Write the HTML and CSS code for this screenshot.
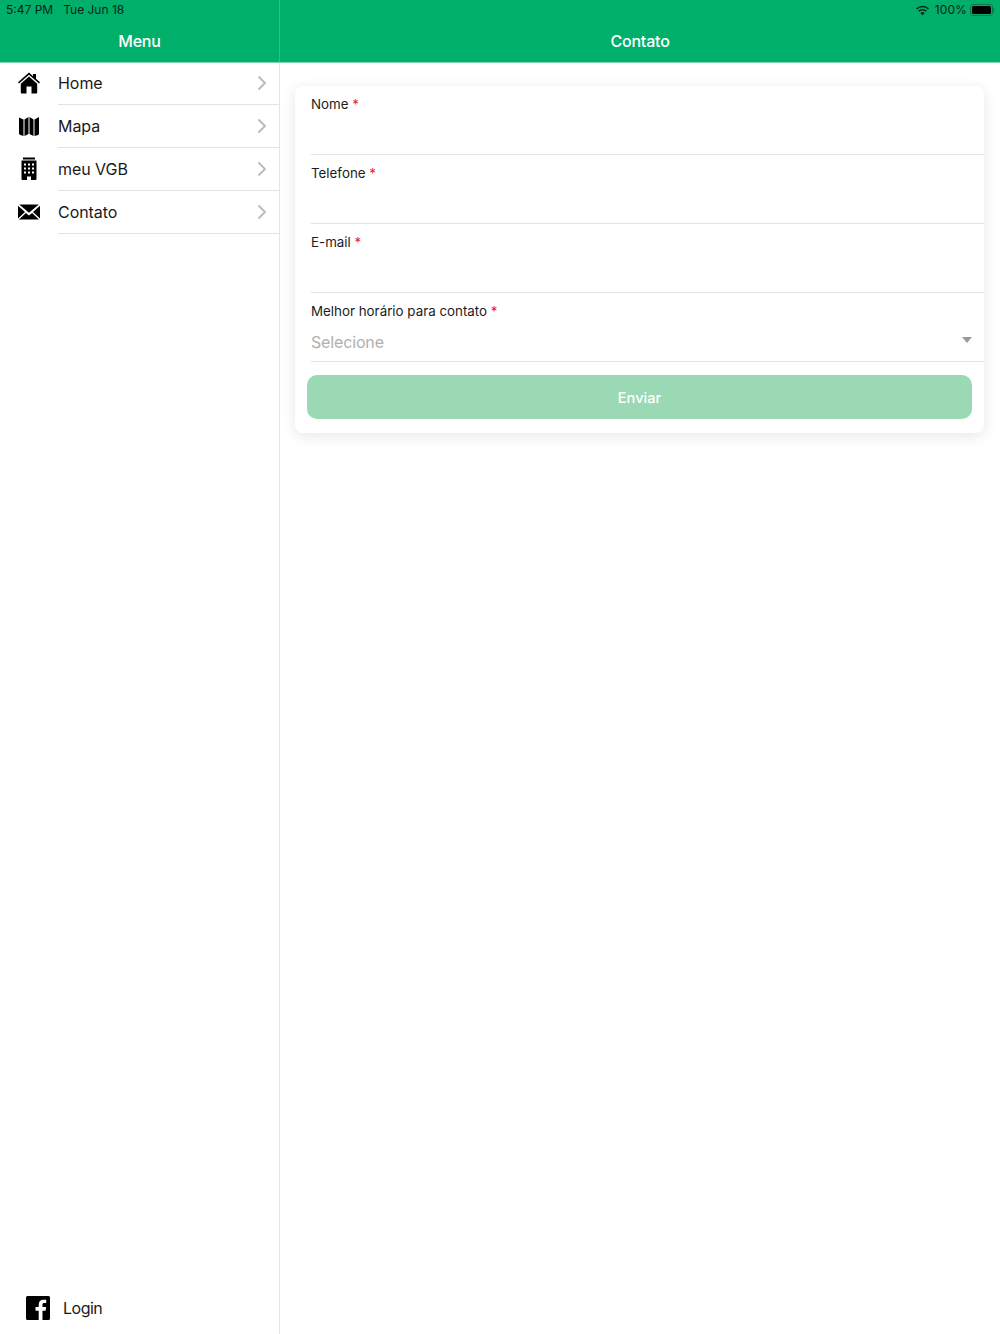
FILE: index.html
```html
<!DOCTYPE html>
<html lang="pt">
<head>
<meta charset="utf-8">
<title>Contato</title>
<link rel="stylesheet" href="styles.css">
</head>
<body>
<div class="app">
  <aside class="sidebar">
    <header class="bar">
      <div class="status status-left"><span>5:47 PM</span><span>Tue Jun 18</span></div>
      <h1 class="bar-title">Menu</h1>
    </header>
    <nav class="menu">
      <a class="menu-item">
        <span class="menu-icon"><svg width="24" height="24" viewBox="0 0 24 24"><path d="M12 1.500 1 11.200l1 1.200L12 3.800l10 8.600 1-1.200-4-3.500V3h-3v2.300z"/><path d="M12 5.600 3.800 12.800V21.500a1 1 0 0 0 1 1H9.500v-7h5v7h4.700a1 1 0 0 0 1-1V12.800z"/></svg></span>
        <span class="menu-body"><span class="menu-label">Home</span><svg class="chev" width="10" height="16" viewBox="0 0 10 16"><path d="M1.500 1.500 8 8l-6.500 6.500"/></svg></span>
      </a>
      <a class="menu-item">
        <span class="menu-icon"><svg width="24" height="24" viewBox="0 0 24 24"><path d="M2 3.500 6.500 5.500V22L3.500 21 2 20zM7.500 5.500 11.500 3V20L7.500 22zM12.500 3 16.500 5.500V22L12.500 20zM17.500 5.500 22 3V20L21 21 17.500 22z"/></svg></span>
        <span class="menu-body"><span class="menu-label">Mapa</span><svg class="chev" width="10" height="16" viewBox="0 0 10 16"><path d="M1.500 1.500 8 8l-6.500 6.500"/></svg></span>
      </a>
      <a class="menu-item">
        <span class="menu-icon"><svg width="24" height="24" viewBox="0 0 24 24"><path fill-rule="evenodd" d="M6 .5h12v2H6zM4.500 3.500h15V22a1 1 0 0 1-1 1H14v-3.500h-4V23H5.500a1 1 0 0 1-1-1zM7 6.500v2h2v-2zm4 0v2h2v-2zm4 0v2h2v-2zM7 10.500v2h2v-2zm4 0v2h2v-2zm4 0v2h2v-2zM7 14.500v2h2v-2zm4 0v2h2v-2zm4 0v2h2v-2z"/></svg></span>
        <span class="menu-body"><span class="menu-label">meu VGB</span><svg class="chev" width="10" height="16" viewBox="0 0 10 16"><path d="M1.500 1.500 8 8l-6.500 6.500"/></svg></span>
      </a>
      <a class="menu-item">
        <span class="menu-icon"><svg width="24" height="24" viewBox="0 0 24 24"><path d="M2.200 4.500h19.600L12 12.800zM1 5.800l7 6.200-7 6.600zM23 5.800V18.600L16 12zM8.900 12.900 12 15.500l3.100-2.600 6.900 6.600H2z"/></svg></span>
        <span class="menu-body"><span class="menu-label">Contato</span><svg class="chev" width="10" height="16" viewBox="0 0 10 16"><path d="M1.500 1.500 8 8l-6.500 6.500"/></svg></span>
      </a>
    </nav>
    <a class="login">
      <svg width="24" height="24" viewBox="0 0 24 24"><path d="M1.500 0h21A1.500 1.500 0 0 1 24 1.500v21a1.500 1.500 0 0 1-1.500 1.500h-6V14.700h3.100l.5-3.600h-3.600V8.800c0-1 .3-1.700 1.800-1.700h1.900V3.900c-.3 0-1.500-.1-2.800-.1-2.800 0-4.700 1.700-4.700 4.800v2.500H9.500v3.600h3.200V24H1.500A1.500 1.500 0 0 1 0 22.500v-21A1.500 1.500 0 0 1 1.500 0z"/></svg>
      <span class="login-label">Login</span>
    </a>
  </aside>
  <main class="content">
    <header class="bar">
      <div class="status status-right">
        <svg width="15" height="11" viewBox="0 0 15 11"><path d="M7.500 2.300c2.100 0 4 .8 5.400 2.100l1.100-1.100A9.500 9.500 0 0 0 7.500.7 9.500 9.500 0 0 0 1 3.300l1.100 1.100a7.900 7.900 0 0 1 5.400-2.100z"/><path d="M7.500 5.500c1.200 0 2.300.5 3.200 1.200l1.100-1.100a6.300 6.300 0 0 0-8.600 0l1.100 1.100c.9-.7 2-1.200 3.200-1.200z"/><path d="M7.500 10.300 9.600 8a3.100 3.100 0 0 0-4.200 0z"/></svg>
        <span class="status-pct">100%</span>
        <span class="battery"><span class="battery-fill"></span></span>
        <span class="battery-nub"></span>
      </div>
      <h1 class="bar-title">Contato</h1>
    </header>
    <form class="card">
      <div class="field"><label class="field-label">Nome <span class="req">*</span></label></div>
      <div class="field"><label class="field-label">Telefone <span class="req">*</span></label></div>
      <div class="field"><label class="field-label">E-mail <span class="req">*</span></label></div>
      <div class="field">
        <label class="field-label">Melhor horário para contato <span class="req">*</span></label>
        <div class="select"><span class="placeholder">Selecione</span><span class="caret"></span></div>
      </div>
      <div class="submit">Enviar</div>
    </form>
  </main>
</div>
</body>
</html>
```

FILE: styles.css
```css
* { box-sizing: border-box; }
html, body { margin: 0; height: 100%; }
body { font-family: Inter, "Noto Sans", sans-serif; color: #111; background: #fff; }
.app { display: flex; height: 1334px; overflow: hidden; }
.sidebar { width: 280px; flex: none; display: flex; flex-direction: column; border-right: 1px solid #e4e4e4; }
.content { flex: 1; min-width: 0; background: #fff; }
.bar { height: 62px; background: #00b06a; box-shadow: 0 1px 0 #7fd7b4; display: flex; flex-direction: column; padding-top: 3px; }
.sidebar .bar { margin-right: -1px; border-right: 1px solid #2fbf85; }
.status { height: 14px; display: flex; align-items: center; font-size: 12px; line-height: 14px; color: #06231a; }
.status-left { padding-left: 6px; gap: 10px; }
.status-right { justify-content: flex-end; padding-right: 6px; gap: 5px; }
.status-right svg { fill: #06231a; }
.status-pct { letter-spacing: .1px; }
.battery { width: 23px; height: 12px; border: 1px solid #0a7a4d; border-radius: 3px; padding: 1px; margin-left: -2px; display: flex; }
.battery-fill { flex: 1; background: #000; border-radius: 1.500px; }
.battery-nub { width: 1px; height: 4px; background: #0a7a4d; margin-left: -5px; }
.bar-title { margin: 9px 0 0; font-size: 16px; line-height: 30px; font-weight: 500; text-align: center; color: #fff; letter-spacing: -.2px; }
.menu { display: flex; flex-direction: column; }
.menu-item { display: flex; height: 43px; }
.menu-icon { width: 58px; flex: none; display: flex; align-items: center; padding-left: 17px; padding-bottom: 1px; }
.menu-icon svg { fill: #000; }
.menu-body { flex: 1; display: flex; align-items: center; justify-content: space-between; padding-right: 12px; border-bottom: 1px solid #e2e2e2; }
.menu-label { font-size: 16px; letter-spacing: -.05px; color: #1a1a1a; }
.chev { fill: none; stroke: #b9b9b9; stroke-width: 1.800; }
.login { margin-top: auto; height: 52px; display: flex; align-items: center; padding: 0 0 0 26px; gap: 13px; }
.login svg { fill: #000; }
.login-label { font-size: 16px; letter-spacing: -.5px; color: #1a1a1a; }
.card { margin: 24px 16px 0 15px; height: 347px; background: #fff; border-radius: 8px; box-shadow: 0 3px 14px rgba(0,0,0,.1); padding-left: 16px; }
.field { height: 69px; padding-top: 9px; border-bottom: 1px solid #e2e2e2; }
.field-label { display: block; font-size: 13.350px; line-height: 18px; color: #1c1c1c; }
.req { color: #f01c1c; }
.select { display: flex; justify-content: space-between; align-items: center; height: 41px; padding: 3px 12px 0 0; }
.placeholder { font-size: 16px; letter-spacing: -.15px; color: #b0b0b0; }
.caret { width: 0; height: 0; border: 5px solid transparent; border-top: 6px solid #9a9a9a; border-bottom: 0; margin-bottom: 5px; }
.submit { margin: 13px 12px 0 -4px; height: 44px; padding-top: 1px; border-radius: 10px; background: #9bd8b4; color: #fff; font-size: 14.600px; font-weight: 500; display: flex; align-items: center; justify-content: center; }
```
